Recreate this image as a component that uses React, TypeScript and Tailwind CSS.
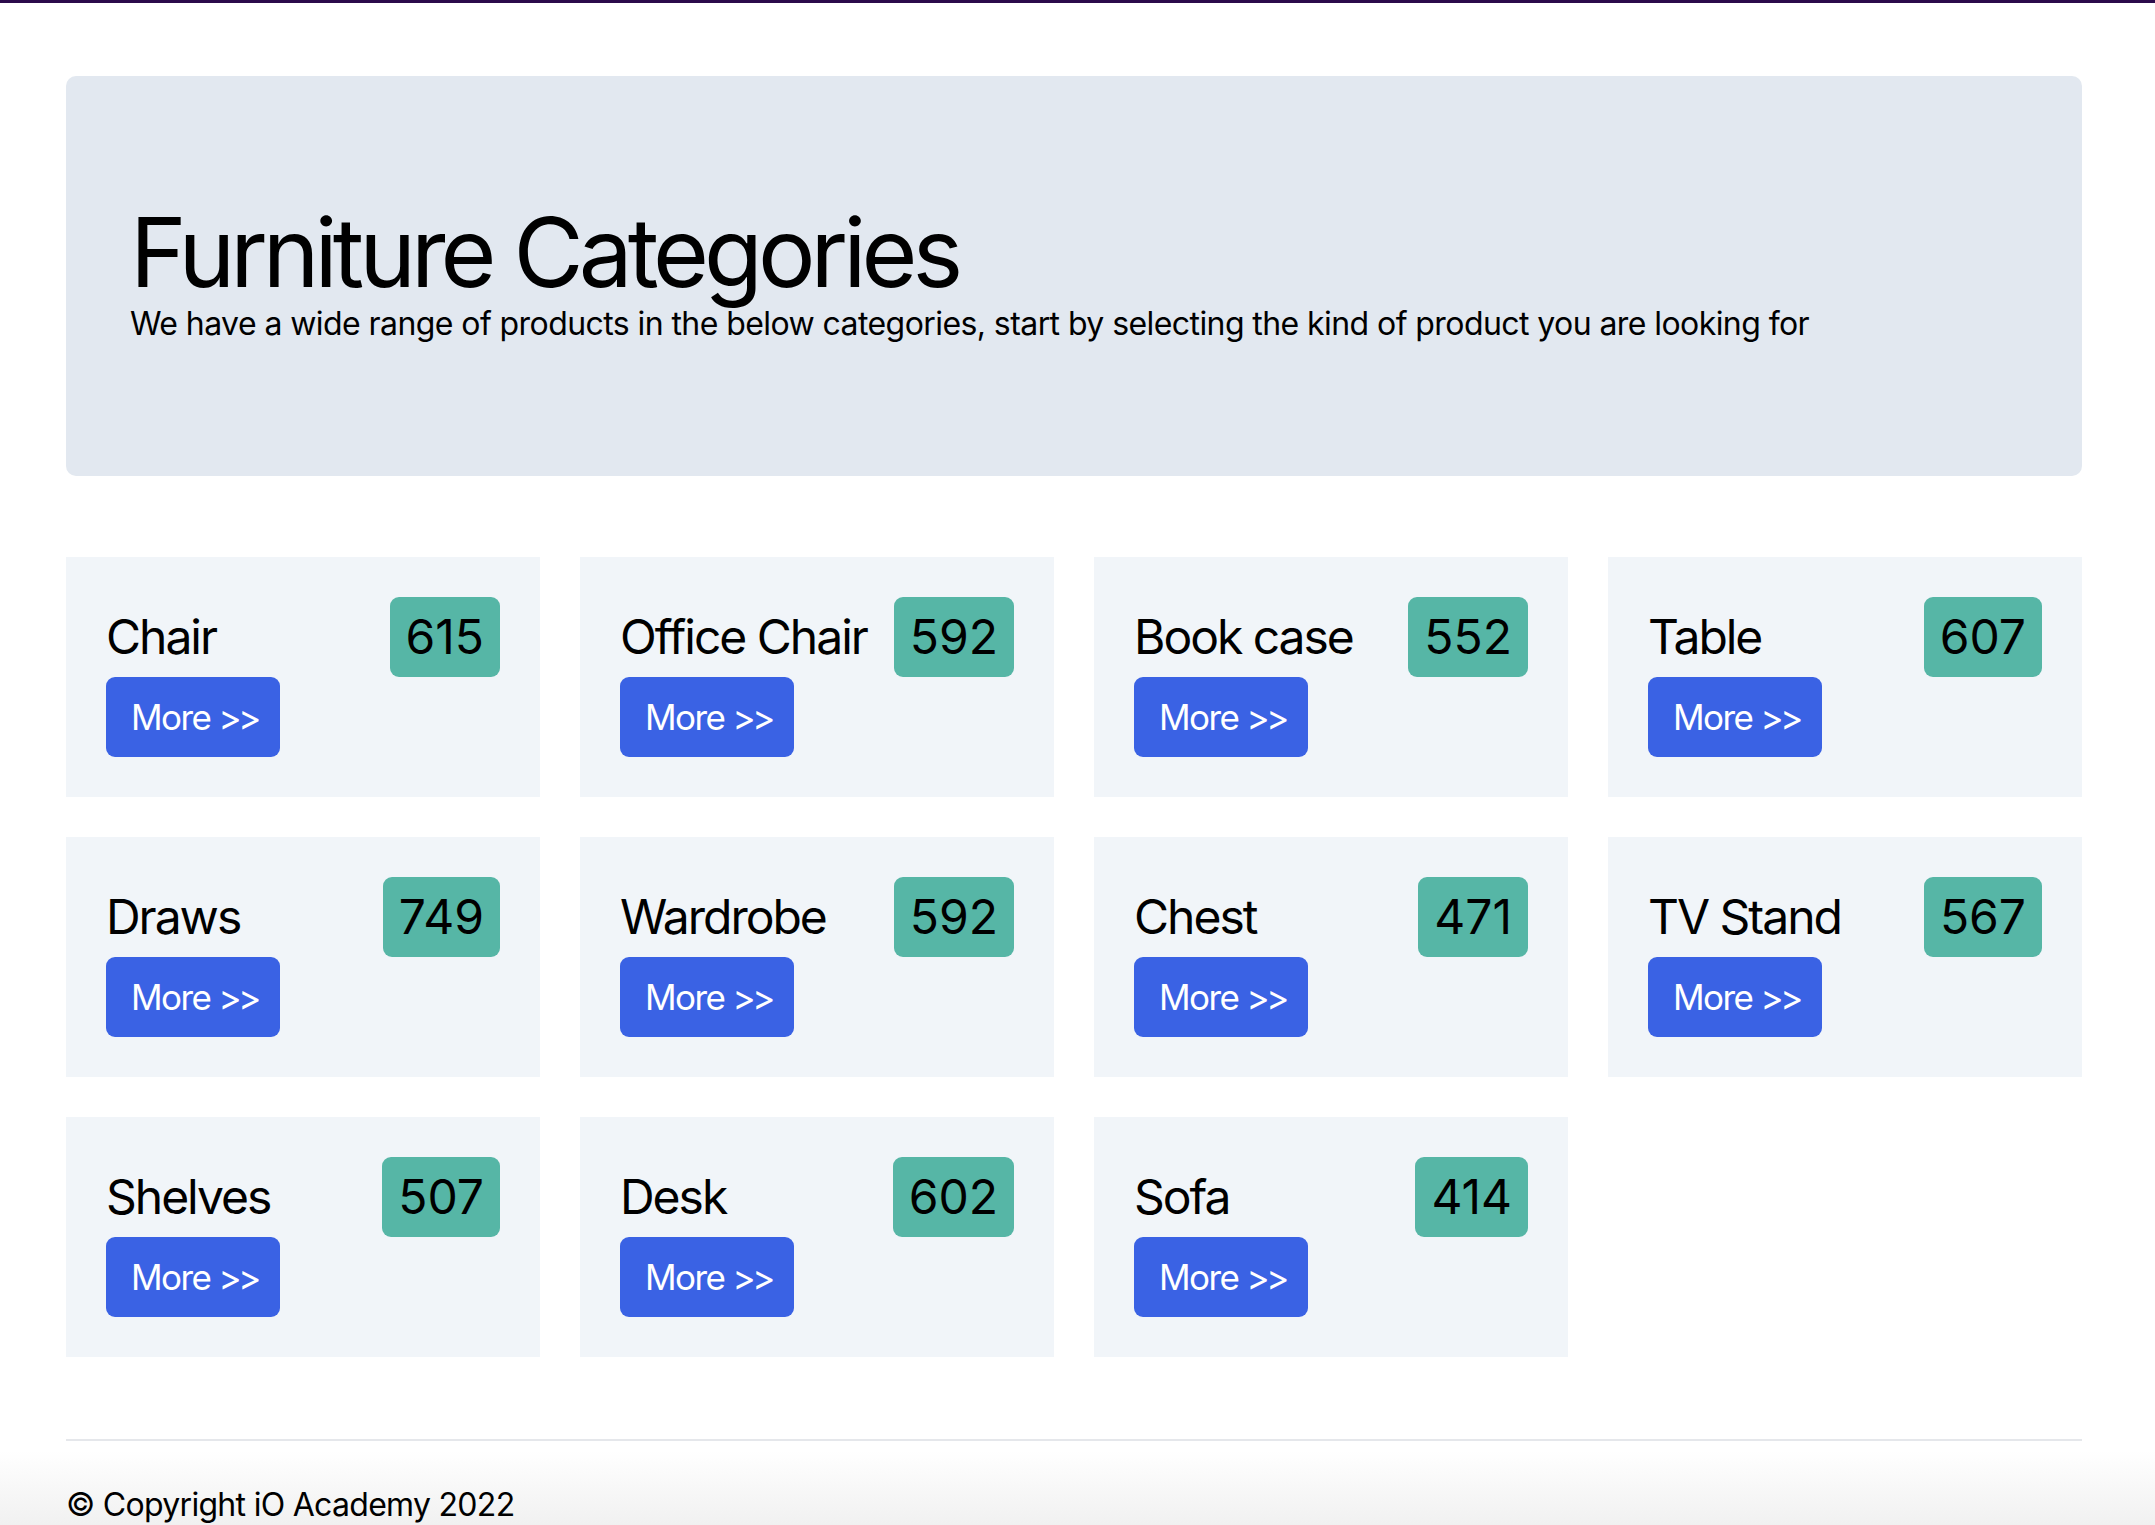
import React from "react";

const items: { name: string; count: number }[] = [
  { name: "Chair", count: 615 },
  { name: "Office Chair", count: 592 },
  { name: "Book case", count: 552 },
  { name: "Table", count: 607 },
  { name: "Draws", count: 749 },
  { name: "Wardrobe", count: 592 },
  { name: "Chest", count: 471 },
  { name: "TV Stand", count: 567 },
  { name: "Shelves", count: 507 },
  { name: "Desk", count: 602 },
  { name: "Sofa", count: 414 },
];

function Card({ name, count }: { name: string; count: number }) {
  return (
    <div className="bg-[#f1f5f9] p-10">
      <div className="flex items-center justify-between">
        <h2 className="text-[48px] leading-[48px] tracking-[-0.042em] text-black">{name}</h2>
        <span className="bg-[#56b6a6] rounded-[9px] px-4 py-2 text-[48px] leading-[64px] text-black">
          {count}
        </span>
      </div>
      <button className="bg-[#3a62e4] text-white rounded-[9px] pl-[25px] pr-[22px] py-3 text-[35px] leading-[56px] tracking-[-0.045em]">
        More <span className="tracking-[-0.1em]">&gt;&gt;</span>
      </button>
    </div>
  );
}

export default function App() {
  return (
    <div
      className="min-h-screen bg-white text-black"
      style={{ fontFamily: "Inter, 'Noto Sans', sans-serif" }}
    >
      <div className="h-[3px] bg-[#2b0b4b]" />
      <div className="ml-[66px] w-[2016px]">
        <section className="mt-[73px] bg-[#e2e8f0] rounded-[10px] px-16 py-32">
          <h1 className="text-[96px] leading-[96px] tracking-[-0.052em]">Furniture Categories</h1>
          <p className="text-[32px] leading-[48px] tracking-[-0.018em]">
            We have a wide range of products in the below categories, start by selecting the kind of product you are looking for
          </p>
        </section>
        <section className="mt-[81px] grid grid-cols-4 gap-10">
          {items.map((it) => (
            <Card key={it.name} name={it.name} count={it.count} />
          ))}
        </section>
        <hr className="mt-[82px] border-0 h-[2px] bg-[#e5e7eb]" />
      </div>
      <footer className="bg-linear-to-b from-white from-[10px] to-[#e6e6e6] h-[140px] pt-10">
        <p className="ml-[66px] text-[32px] leading-[48px] tracking-[-0.022em]">© Copyright iO Academy 2022</p>
      </footer>
    </div>
  );
}
